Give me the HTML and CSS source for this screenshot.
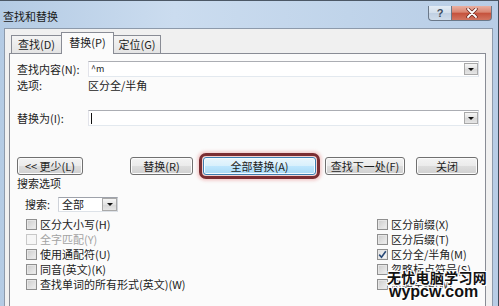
FILE: index.html
```html
<!DOCTYPE html>
<html lang="zh-CN">
<head>
    <meta charset="UTF-8">
    <title>查找和替换</title>
    <link rel="stylesheet" href="styles.css">
</head>
<body>
    <div class="window">
        <div class="titlebar">
            <span class="title">查找和替换</span>
            <div class="caption-buttons">
                <span class="cap-help">?</span>
                <span class="cap-close">
                    <svg width="12" height="10" viewBox="0 0 12 10">
                        <path d="M2 1 L10 9 M10 1 L2 9" stroke="#6b2a22" stroke-width="3.4" stroke-linecap="round"/>
                        <path d="M2 1 L10 9 M10 1 L2 9" stroke="#fff" stroke-width="1.8" stroke-linecap="round"/>
                    </svg>
                </span>
            </div>
        </div>

        <div class="client">
            <div class="tabs">
                <span class="tab tab-find">查找(<u>D</u>)</span>
                <span class="tab tab-replace active">替换(<u>P</u>)</span>
                <span class="tab tab-goto">定位(<u>G</u>)</span>
            </div>

            <div class="panel">
                <div class="row">
                    <span class="field-label">查找内容(<u>N</u>):</span>
                    <div class="combo">
                        <span class="combo-text">^m</span>
                        <span class="drop"></span>
                    </div>
                </div>
                <div class="row options-row">
                    <span class="field-label">选项:</span>
                    <span>区分全/半角</span>
                </div>
                <div class="row replace-row">
                    <span class="field-label">替换为(<u>I</u>):</span>
                    <div class="combo">
                        <span class="caret"></span>
                        <span class="drop"></span>
                    </div>
                </div>

                <div class="buttons">
                    <span class="btn btn-less">&lt;&lt; 更少(<u>L</u>)</span>
                    <span class="btn btn-replace">替换(<u>R</u>)</span>
                    <span class="btn btn-all">全部替换(<u>A</u>)</span>
                    <span class="btn btn-next">查找下一处(<u>F</u>)</span>
                    <span class="btn btn-close">关闭</span>
                </div>

                <div class="section-title">搜索选项</div>
                <div class="row search-row">
                    <span class="search-label">搜索<u>:</u></span>
                    <div class="select">
                        <span class="select-text">全部</span>
                        <span class="drop"></span>
                    </div>
                </div>

                <div class="checks">
                    <label class="check"><span class="box"></span>区分大小写(<u>H</u>)</label>
                    <label class="check"><span class="box"></span>区分前缀(<u>X</u>)</label>
                    <label class="check disabled"><span class="box"></span>全字匹配(<u>Y</u>)</label>
                    <label class="check"><span class="box"></span>区分后缀(<u>T</u>)</label>
                    <label class="check"><span class="box"></span>使用通配符(<u>U</u>)</label>
                    <label class="check"><span class="box checked">
                        <svg width="9" height="9" viewBox="0 0 9 9"><path d="M1.2 4.6 L3.5 7.2 L7.8 1.2" fill="none" stroke="#2a4a78" stroke-width="1.6"/></svg>
                    </span>区分全/半角(<u>M</u>)</label>
                    <label class="check"><span class="box"></span>同音(英文)(<u>K</u>)</label>
                    <label class="check"><span class="box"></span>忽略标点符号(<u>S</u>)</label>
                    <label class="check"><span class="box"></span>查找单词的所有形式(英文)(<u>W</u>)</label>
                    <label class="check"><span class="box"></span>忽略空格(<u>W</u>)</label>
                </div>
            </div>
        </div>
    </div>

    <div class="watermark">
        <div class="wm-cn">无忧电脑学习网</div>
        <div class="wm-en">wypcw.com</div>
    </div>
</body>
</html>
```

FILE: styles.css
```css
body {
    margin: 0;
    width: 499px;
    height: 306px;
    overflow: hidden;
    position: relative;
    font-family: "Noto Sans CJK SC", "Liberation Sans", sans-serif;
    font-size: 11px;
    color: #222;
}

u {
    text-decoration: none;
}

.window {
    height: 306px;
    box-sizing: border-box;
    display: flex;
    flex-direction: column;
    background: linear-gradient(90deg, #b4cbe4, #cbdcef 35%, #c0d4ea 70%, #b8cde6);
    border-top: 1px solid #4c5866;
    border-right: 1px solid #3f4b5a;
    padding: 0 5px 0 4px;
}

.titlebar {
    height: 27px;
    flex: none;
    display: flex;
    align-items: flex-start;
}

.title {
    margin: 8px 0 0 -1px;
    line-height: 14px;
    color: #1a1a1a;
}

.caption-buttons {
    margin: 5px 1px 0 auto;
    display: flex;
}

.cap-help,
.cap-close {
    height: 15px;
    box-sizing: border-box;
    border: 1px solid #6a7889;
    border-top: none;
    display: flex;
    align-items: center;
    justify-content: center;
}

.cap-help {
    width: 23px;
    border-radius: 0 0 0 4px;
    border-right: none;
    background: linear-gradient(#e4ecf5, #d2deeb 50%, #bfcfe2 50%, #cfdcea);
    color: #3d4d60;
    font-family: "Liberation Sans", sans-serif;
    font-weight: bold;
    font-size: 11px;
}

.cap-close {
    width: 41px;
    border-radius: 0 0 4px 0;
    background: linear-gradient(#eab0a2, #d98571 45%, #c5513b 50%, #d27561);
}

.client {
    flex: 1;
    display: flex;
    flex-direction: column;
    background: #f0f0f0;
    border: 1px solid #8d9aab;
    border-bottom: none;
    padding: 3px 6px 0 4px;
}

.tabs {
    display: flex;
    align-items: flex-end;
    height: 21px;
    padding-left: 2px;
    flex: none;
}

.tab {
    height: 18px;
    box-sizing: border-box;
    border: 1px solid #898c95;
    border-bottom: none;
    margin-right: -1px;
    background: linear-gradient(#f4f4f4, #e4e4e4);
    text-align: center;
    line-height: 16px;
}

.tab-find { width: 51px; }
.tab-replace { width: 53px; }
.tab-goto { width: 48px; }

.tab.active {
    height: 22px;
    margin-bottom: -1px;
    position: relative;
    z-index: 1;
    background: #fbfbfb;
    line-height: 18px;
}

.panel {
    flex: 1;
    border: 1px solid #898c95;
    border-bottom: none;
    background: #fbfbfb;
    padding: 7px 6px 0 7px;
}

.row {
    display: flex;
    align-items: center;
}

.field-label {
    width: 71px;
    flex: none;
}

.options-row {
    height: 14px;
    margin-top: 1px;
    line-height: 14px;
}

.replace-row {
    margin-top: 18px;
}

.combo {
    flex: 1;
    height: 16px;
    box-sizing: border-box;
    border: 1px solid;
    border-color: #abadb3 #dbdfe6 #e3e9ef #e2e3ea;
    background: #fff;
    display: flex;
    align-items: center;
}

.combo-text {
    padding-left: 2px;
    font-size: 9px;
    line-height: 12px;
}

.caret {
    width: 1px;
    height: 11px;
    margin-left: 2px;
    background: #111;
}

.drop {
    margin-left: auto;
    width: 14px;
    height: 12px;
    box-sizing: border-box;
    border: 1px solid #a9a9a9;
    background: linear-gradient(#f6f6f6, #e2e2e2 50%, #d6d6d6 50%, #e6e6e6);
    display: flex;
    align-items: center;
    justify-content: center;
}

.drop::after {
    content: "";
    border-left: 3px solid transparent;
    border-right: 3px solid transparent;
    border-top: 3px solid #111;
}

.buttons {
    display: flex;
    margin-top: 31px;
}

.btn {
    height: 18px;
    box-sizing: border-box;
    border: 1px solid #707070;
    border-radius: 3px;
    background: linear-gradient(#f3f3f3, #ebebeb 48%, #dddddd 52%, #d0d0d0);
    box-shadow: inset 0 0 0 1px #fbfbfb;
    text-align: center;
    line-height: 16px;
    color: #1e1e1e;
}

.btn-less { width: 66px; }
.btn-replace { width: 63px; margin-left: 47px; }
.btn-next { width: 80px; margin-left: 9px; }
.btn-close { width: 62px; margin-left: 11px; }

.btn-all {
    width: 113px;
    margin-left: 10px;
    border-color: #3c7fb1;
    background: linear-gradient(#eaf6fd, #d9f0fc 48%, #bee6fd 52%, #a9daf6);
    outline: 3px solid #7a2e33;
    outline-offset: 1px;
    box-shadow: inset 0 0 0 1px #f4fbff, 0 0 3px 6px rgba(235, 160, 160, 0.45);
}

.section-title {
    margin-top: 1px;
    height: 14px;
    line-height: 14px;
}

.search-row {
    margin-top: 6px;
    padding-left: 8px;
}

.search-label {
    width: 33px;
}

.select {
    width: 60px;
    height: 15px;
    box-sizing: border-box;
    border: 1px solid;
    border-color: #9ea2aa #d0d4da #dde2e8 #cfd3da;
    background: #fff;
    display: flex;
    align-items: center;
}

.select-text {
    padding-left: 3px;
    line-height: 13px;
}

.select .drop {
    height: 13px;
    width: 15px;
}

.checks {
    display: grid;
    grid-template-columns: 351px 1fr;
    margin-top: 5px;
    padding-left: 9px;
}

.check {
    display: flex;
    align-items: center;
    height: 15px;
    line-height: 15px;
}

.box {
    width: 11px;
    height: 11px;
    box-sizing: border-box;
    margin-right: 3px;
    border: 1px solid #8f8f8f;
    background: linear-gradient(135deg, #cbcbcb, #f1f1f1);
    box-shadow: inset 0 0 0 1px #e6e6e6;
    display: flex;
    align-items: center;
    justify-content: center;
}

.box.checked {
    background: linear-gradient(135deg, #dedede, #fafafa);
}

.check.disabled {
    color: #a3a3a3;
}

.check.disabled .box {
    border-color: #c8c8c8;
    background: #f6f6f6;
    box-shadow: none;
}

.watermark {
    position: absolute;
    left: 387px;
    top: 270px;
    font-weight: bold;
    color: #111;
    text-shadow: 1px 1px 0 #fff, -1px -1px 0 #fff, 1px -1px 0 #fff, -1px 1px 0 #fff, 0 0 3px #fff;
}

.wm-cn {
    font-size: 14px;
    line-height: 15px;
    letter-spacing: 0.3px;
}

.wm-en {
    font-family: "Liberation Sans", sans-serif;
    font-size: 16px;
    line-height: 14px;
    padding-left: 2px;
}
```
